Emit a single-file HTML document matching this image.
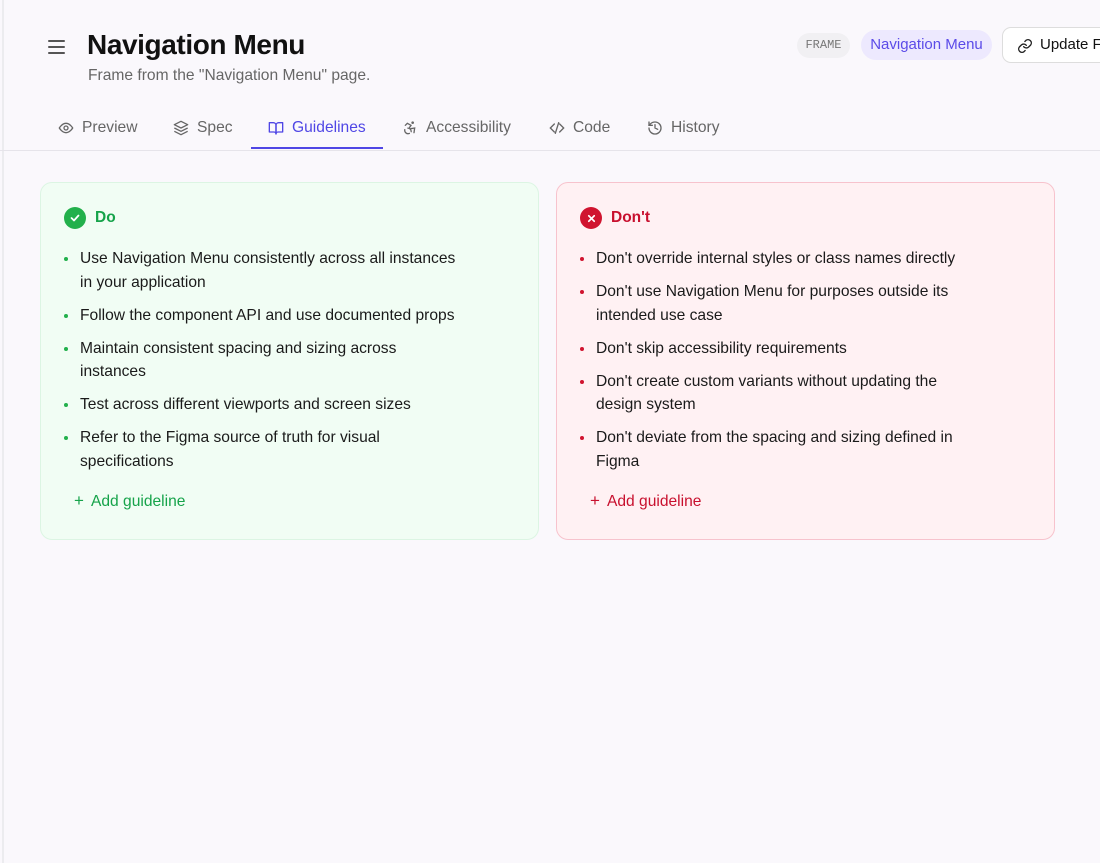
<!DOCTYPE html>
<html><head><meta charset="utf-8"><style>
*{box-sizing:border-box;margin:0;padding:0}
body{width:1100px;height:863px;background:#faf8fc;font-family:"Liberation Sans",sans-serif;position:relative;overflow:hidden;color:#111}
.vl{position:absolute;left:2px;top:0;width:2px;height:863px;background:#ececef}
.menu{position:absolute;left:48px;top:40px;width:17px}
.menu i{display:block;height:2px;background:#555;margin-bottom:4px;border-radius:1px}
h1{position:absolute;left:87px;top:29px;font-size:28px;font-weight:700;letter-spacing:-0.4px;color:#111}
.sub{position:absolute;left:88px;top:67px;font-size:15.6px;color:#666}
.frame{position:absolute;left:797px;top:33px;height:25px;width:53px;border-radius:13px;background:#f1f0f3;font-family:"Liberation Mono",monospace;font-size:12px;color:#777;text-align:center;line-height:25px}
.nm{position:absolute;left:861px;top:30px;height:30px;width:131px;border-radius:15px;background:#ede9fe;color:#5b4be8;font-size:15px;text-align:center;line-height:30px;white-space:nowrap}
.upd{position:absolute;left:1002px;top:27px;height:36px;width:140px;border:1px solid #ddd;border-radius:9px;background:#fff;font-size:15px;line-height:34px;padding-left:37px;white-space:nowrap}
.upd svg{position:absolute;left:14px;top:10px}
.tabs{position:absolute;left:0;top:150px;width:1100px;height:1px;background:#e6e4ea}
.tab{position:absolute;top:119px;font-size:15.6px;color:#666;display:flex;align-items:center;gap:8px;white-space:nowrap}
.tab svg{width:16px;height:16px}
.tab.a{color:#4f46e5}
.ul{position:absolute;left:251px;top:147px;width:132px;height:2px;background:#4f46e5}
.card{position:absolute;top:182px;width:499px;height:358px;border-radius:12px;padding:24px 0 0 23px}
.do{left:40px;background:#f1fdf4;border:1px solid #dcf5e3}
.dont{left:556px;background:#fff1f3;border:1px solid #f7c3cd}
.hd{display:flex;align-items:center;gap:9px;font-size:15.5px;font-weight:700;margin-bottom:18px}
.do .hd{color:#16a34a}.dont .hd{color:#c8102e}
.ic{width:22px;height:22px;border-radius:50%;display:flex;align-items:center;justify-content:center}
.do .ic{background:#22b04b}.dont .ic{background:#d0142f}
ul{list-style:none;width:400px}
li{position:relative;padding-left:16px;font-size:15.6px;line-height:23.5px;margin-bottom:9.5px;color:#1a1a1a}
li:before{content:"";position:absolute;left:0;top:10px;width:4px;height:4px;border-radius:50%}
.do li:before{background:#22b04b}.dont li:before{background:#d0142f}
.add{font-size:15.6px;margin-top:18px;padding-left:10px}
.do .add{color:#16a34a}.dont .add{color:#c8102e}
.add span{font-size:17px;margin-right:7px;font-weight:300}
</style></head><body>
<div class="vl"></div>
<div class="menu"><i></i><i></i><i></i></div>
<h1>Navigation Menu</h1>
<div class="sub">Frame from the "Navigation Menu" page.</div>
<div class="frame">FRAME</div>
<div class="nm">Navigation Menu</div>
<div class="upd"><svg width="16" height="16" viewBox="0 0 24 24" fill="none" stroke="#222" stroke-width="2" stroke-linecap="round"><path d="M10 13a5 5 0 0 0 7.5.5l3-3a5 5 0 0 0-7-7l-1.7 1.7"/><path d="M14 11a5 5 0 0 0-7.5-.5l-3 3a5 5 0 0 0 7 7l1.7-1.7"/></svg>Update Figma</div>

<div class="tab" style="left:58px"><svg viewBox="0 0 24 24" fill="none" stroke="#666" stroke-width="2"><path d="M2 12s4-7 10-7 10 7 10 7-4 7-10 7S2 12 2 12z"/><circle cx="12" cy="12" r="3"/></svg>Preview</div>
<div class="tab" style="left:173px"><svg viewBox="0 0 24 24" fill="none" stroke="#666" stroke-width="2" stroke-linejoin="round"><path d="M12 2 2 7l10 5 10-5z"/><path d="m2 12 10 5 10-5"/><path d="m2 17 10 5 10-5"/></svg>Spec</div>
<div class="tab a" style="left:268px"><svg viewBox="0 0 24 24" fill="none" stroke="#4f46e5" stroke-width="2" stroke-linejoin="round"><path d="M2 4h6a4 4 0 0 1 4 4v13a3 3 0 0 0-3-3H2z"/><path d="M22 4h-6a4 4 0 0 0-4 4v13a3 3 0 0 1 3-3h7z"/></svg>Guidelines</div>
<div class="tab" style="left:402px"><svg viewBox="0 0 24 24" fill="none" stroke="#666" stroke-width="2" stroke-linecap="round"><circle cx="16" cy="4" r="1"/><path d="m18 19 1-7-6 1"/><path d="m5 8 3-3 5.5 3-2.4 3.5"/><path d="M4.2 14.5a5 5 0 0 0 6.9 5.6"/><path d="M13.8 17.5a5 5 0 0 0-5-5.3"/></svg>Accessibility</div>
<div class="tab" style="left:549px"><svg viewBox="0 0 24 24" fill="none" stroke="#666" stroke-width="2" stroke-linecap="round"><path d="m16 18 6-6-6-6"/><path d="m8 6-6 6 6 6"/><path d="m14.5 4-5 16"/></svg>Code</div>
<div class="tab" style="left:647px"><svg viewBox="0 0 24 24" fill="none" stroke="#666" stroke-width="2" stroke-linecap="round"><path d="M3 12a9 9 0 1 0 9-9 9.75 9.75 0 0 0-6.74 2.74L3 8"/><path d="M3 3v5h5"/><path d="M12 7v5l4 2"/></svg>History</div>
<div class="tabs"></div>
<div class="ul"></div>

<div class="card do">
<div class="hd"><div class="ic"><svg width="12" height="12" viewBox="0 0 24 24" fill="none" stroke="#fff" stroke-width="3.5" stroke-linecap="round" stroke-linejoin="round"><path d="M5 12l5 5 9-10"/></svg></div>Do</div>
<ul>
<li>Use Navigation Menu consistently across all instances<br>in your application</li>
<li>Follow the component API and use documented props</li>
<li>Maintain consistent spacing and sizing across<br>instances</li>
<li>Test across different viewports and screen sizes</li>
<li>Refer to the Figma source of truth for visual<br>specifications</li>
</ul>
<div class="add"><span>+</span>Add guideline</div>
</div>

<div class="card dont">
<div class="hd"><div class="ic"><svg width="11" height="11" viewBox="0 0 24 24" fill="none" stroke="#fff" stroke-width="3.5" stroke-linecap="round"><path d="M6 6l12 12M18 6 6 18"/></svg></div>Don't</div>
<ul>
<li>Don't override internal styles or class names directly</li>
<li>Don't use Navigation Menu for purposes outside its<br>intended use case</li>
<li>Don't skip accessibility requirements</li>
<li>Don't create custom variants without updating the<br>design system</li>
<li>Don't deviate from the spacing and sizing defined in<br>Figma</li>
</ul>
<div class="add"><span>+</span>Add guideline</div>
</div>
</body></html>
